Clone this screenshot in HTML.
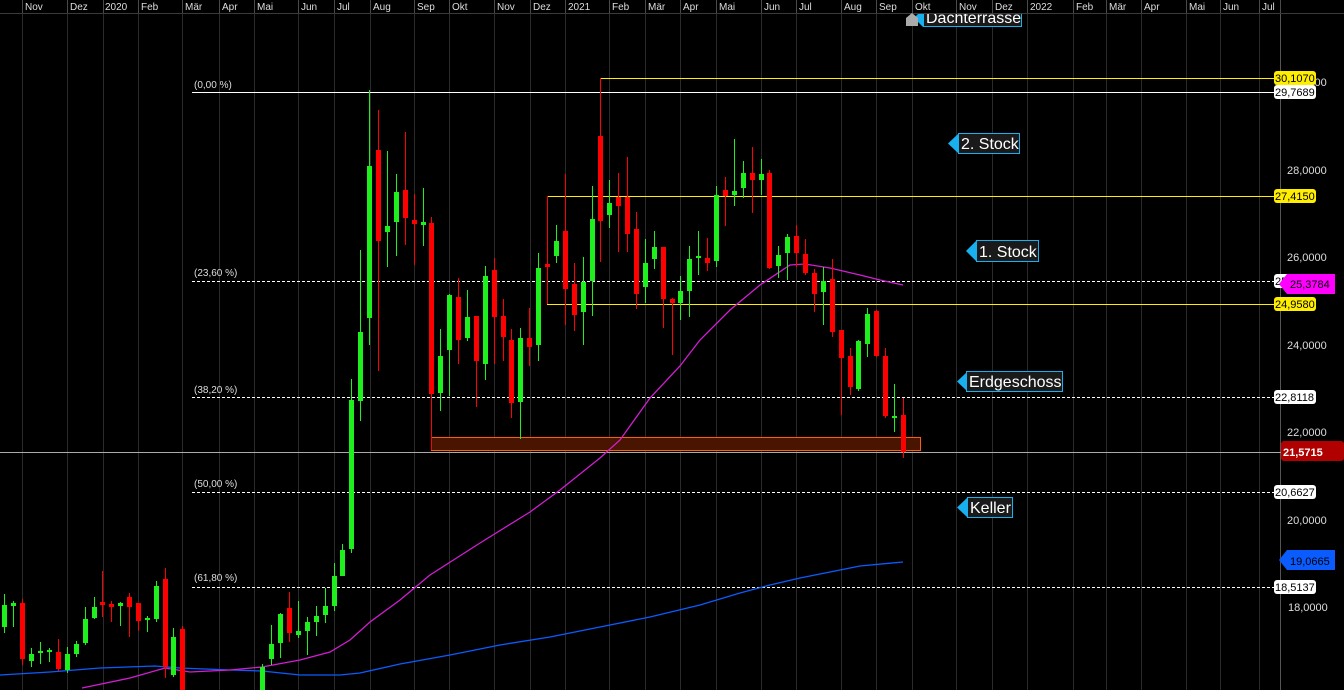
<!DOCTYPE html>
<html><head><meta charset="utf-8"><style>
html,body{margin:0;padding:0;background:#000;width:1344px;height:690px;overflow:hidden}
svg{display:block}
text{font-family:"Liberation Sans",sans-serif}
</style></head><body>
<svg width="1344" height="690" viewBox="0 0 1344 690" xmlns="http://www.w3.org/2000/svg">
<rect width="1344" height="690" fill="#000"/>
<!-- vertical grid -->
<g stroke="#2a2a2a" stroke-width="1">
<path d="M22.5 14V690M67.5 14V690M103.5 14V690M138.5 14V690M182.5 14V690M219.5 14V690M254.5 14V690M298.5 14V690M334.5 14V690M370.5 14V690M414.5 14V690M449.5 14V690M494.5 14V690M530.5 14V690M565.5 14V690M609.5 14V690M645.5 14V690M680.5 14V690M716.5 14V690M761.5 14V690M796.5 14V690M841.5 14V690M876.5 14V690M912.5 14V690M956.5 14V690M992.5 14V690M1027.5 14V690M1073.5 14V690M1106.5 14V690M1141.5 14V690M1186.5 14V690M1220.5 14V690M1259.5 14V690"/>
</g>
<path d="M1280.5 14V690" stroke="#555"/>
<!-- orange box -->
<rect x="431.5" y="437.5" width="489" height="13" fill="#4a1500" stroke="#ff5a10" stroke-width="1"/>
<!-- horizontal levels -->
<path d="M0 452.5H1281" stroke="#aaa"/>
<path d="M192 92.5H1274" stroke="#fff"/>
<g stroke="#fff" stroke-dasharray="3,2"><path d="M192 281.5H1274M192 397.5H1274M192 492.5H1274M192 587.5H1274"/></g>
<path d="M600 78.5H1274M547 196.5H1274M547 304.5H1274" stroke="#ffee00"/>
<path d="M600.5 78V92M547.5 196V304" stroke="#f00"/>
<g fill="#ddd" font-size="10">
<text x="194" y="88">(0,00 %)</text><text x="194" y="276">(23,60 %)</text><text x="194" y="393">(38,20 %)</text><text x="194" y="487">(50,00 %)</text><text x="194" y="581">(61,80 %)</text>
</g>
<!-- moving averages -->
<polyline fill="none" stroke="#0a5cff" stroke-width="1.3" points="0,675 50,672 100,668 155,666 180,668 230,670 262,671 300,675 340,675 360,673 400,664 450,655 500,645 550,637 600,627 650,617 700,605 740,593 770,585 800,578 830,572 860,566 903,562"/>
<polyline fill="none" stroke="#d21ed2" stroke-width="1.3" points="82,688 130,678 165,668 190,672 230,670 262,667 300,660 330,652 350,640 370,622 400,600 430,575 480,543 530,512 560,490 600,458 620,440 650,398 680,366 700,340 730,310 760,285 790,265 805,264 830,268 860,275 880,280 903,285"/>
<!-- green candles -->
<g fill="#1ef01e">
<path stroke="#1ef01e" stroke-width="1" d="M4.5 594V633M13.5 601V627M31.5 648V667M40.5 642V664M49.5 648V662M67.5 647V673M76.5 641V657M85.5 607V645M94.5 597V619M120.5 602V626M147.5 616V632M156.5 581V622M173.5 628V677M262.5 664V690M271.5 625V665M280.5 613V658M298.5 601V638M307.5 617V655M316.5 606V636M325.5 588V623M334.5 563V611M342.5 544V576M351.5 379V553M360.5 250V421M369.5 90V345M387.5 151V267M396.5 174V256M423.5 188V246M440.5 329V411M449.5 294V396M467.5 290V341M485.5 266V380M520.5 328V439M538.5 253V361M556.5 225V263M583.5 257V345M592.5 186V316M609.5 180V228M645.5 239V303M654.5 231V269M680.5 276V320M689.5 246V317M698.5 231V275M716.5 186V267M734.5 139V206M743.5 161V198M761.5 159V195M778.5 246V278M787.5 234V280M823.5 267V325M858.5 340V391M867.5 308V357M894.5 384V432"/>
<rect x="2" y="605" width="5" height="22"/><rect x="11" y="603" width="5" height="3"/><rect x="29" y="654" width="5" height="7"/><rect x="38" y="651" width="5" height="2"/><rect x="47" y="650" width="5" height="2"/><rect x="65" y="654" width="5" height="16"/><rect x="74" y="644" width="5" height="10"/><rect x="83" y="619" width="5" height="24"/><rect x="92" y="607" width="5" height="11"/><rect x="118" y="603" width="5" height="3"/><rect x="145" y="618" width="5" height="2"/><rect x="154" y="586" width="5" height="33"/><rect x="171" y="637" width="5" height="38"/><rect x="260" y="667" width="5" height="23"/><rect x="269" y="644" width="5" height="15"/><rect x="278" y="614" width="5" height="29"/><rect x="296" y="631" width="5" height="4"/><rect x="305" y="622" width="5" height="9"/><rect x="314" y="616" width="5" height="6"/><rect x="323" y="606" width="5" height="9"/><rect x="332" y="576" width="5" height="30"/><rect x="340" y="550" width="5" height="26"/><rect x="349" y="400" width="5" height="149"/><rect x="358" y="332" width="5" height="69"/><rect x="367" y="166" width="5" height="152"/><rect x="385" y="226" width="5" height="6"/><rect x="394" y="192" width="5" height="30"/><rect x="421" y="222" width="5" height="3"/><rect x="438" y="356" width="5" height="37"/><rect x="447" y="295" width="5" height="55"/><rect x="465" y="317" width="5" height="21"/><rect x="483" y="276" width="5" height="88"/><rect x="518" y="338" width="5" height="64"/><rect x="536" y="268" width="5" height="77"/><rect x="554" y="241" width="5" height="15"/><rect x="581" y="282" width="5" height="30"/><rect x="590" y="219" width="5" height="62"/><rect x="607" y="203" width="5" height="12"/><rect x="643" y="263" width="5" height="24"/><rect x="652" y="247" width="5" height="12"/><rect x="678" y="291" width="5" height="12"/><rect x="687" y="259" width="5" height="32"/><rect x="696" y="256" width="5" height="2"/><rect x="714" y="195" width="5" height="66"/><rect x="732" y="191" width="5" height="4"/><rect x="741" y="173" width="5" height="15"/><rect x="759" y="174" width="5" height="6"/><rect x="776" y="255" width="5" height="11"/><rect x="785" y="237" width="5" height="16"/><rect x="821" y="281" width="5" height="11"/><rect x="856" y="341" width="5" height="48"/><rect x="865" y="314" width="5" height="30"/><rect x="892" y="416" width="5" height="2"/>
</g>
<!-- red candles -->
<g fill="#ff0000">
<path stroke="#ff0000" stroke-width="1" d="M22.5 599V665M58.5 639V671M102.5 571V617M111.5 601V622M129.5 593V637M138.5 603V631M165.5 568V678M182.5 626V690M289.5 592V642M378.5 110V371M405.5 132V245M414.5 194V265M431.5 217V450M458.5 278V364M476.5 316V407M494.5 258V364M503.5 299V361M511.5 329V418M529.5 308V366M547.5 262V268M565.5 174V325M574.5 263V331M600.5 78V262M618.5 173V252M627.5 157V252M636.5 212V309M663.5 247V328M672.5 298V355M707.5 238V271M725.5 177V226M752.5 147V213M769.5 170V269M796.5 225V267M805.5 239V275M814.5 269V312M832.5 259V337M841.5 330V415M850.5 348V395M876.5 310V357M885.5 348V418M903.5 398V458"/>
<rect x="20" y="603" width="5" height="56"/><rect x="56" y="652" width="5" height="17"/><rect x="100" y="602" width="5" height="3"/><rect x="109" y="604" width="5" height="3"/><rect x="127" y="597" width="5" height="10"/><rect x="136" y="603" width="5" height="18"/><rect x="163" y="579" width="5" height="88"/><rect x="180" y="629" width="5" height="61"/><rect x="287" y="608" width="5" height="25"/><rect x="376" y="150" width="5" height="91"/><rect x="403" y="190" width="5" height="28"/><rect x="412" y="220" width="5" height="4"/><rect x="429" y="223" width="5" height="171"/><rect x="456" y="297" width="5" height="43"/><rect x="474" y="316" width="5" height="45"/><rect x="492" y="270" width="5" height="47"/><rect x="501" y="316" width="5" height="21"/><rect x="509" y="340" width="5" height="63"/><rect x="527" y="338" width="5" height="9"/><rect x="545" y="264" width="5" height="3"/><rect x="563" y="231" width="5" height="58"/><rect x="572" y="284" width="5" height="31"/><rect x="598" y="136" width="5" height="85"/><rect x="616" y="197" width="5" height="9"/><rect x="625" y="197" width="5" height="37"/><rect x="634" y="229" width="5" height="65"/><rect x="661" y="247" width="5" height="52"/><rect x="670" y="299" width="5" height="4"/><rect x="705" y="258" width="5" height="5"/><rect x="723" y="190" width="5" height="6"/><rect x="750" y="173" width="5" height="7"/><rect x="767" y="173" width="5" height="95"/><rect x="794" y="236" width="5" height="17"/><rect x="803" y="254" width="5" height="19"/><rect x="812" y="273" width="5" height="21"/><rect x="830" y="279" width="5" height="53"/><rect x="839" y="330" width="5" height="28"/><rect x="848" y="356" width="5" height="31"/><rect x="874" y="311" width="5" height="45"/><rect x="883" y="356" width="5" height="60"/><rect x="901" y="415" width="5" height="37"/>
</g>
<!-- annotation labels -->
<g font-size="16" fill="#fff">
<rect x="923.5" y="2.5" width="98" height="24" fill="#1a1a1a" stroke="#19b0f0"/>
<polygon points="914,18 923,9 923,27" fill="#19b0f0"/>
<text x="926" y="23">Dachterrasse</text>
<rect x="958.5" y="133.5" width="61" height="20" fill="#1a1a1a" stroke="#19b0f0"/><polygon points="948,143.5 958,134 958,153" fill="#19b0f0"/><text x="961" y="149">2. Stock</text>
<rect x="976.5" y="240.5" width="62" height="21" fill="#1a1a1a" stroke="#19b0f0"/><polygon points="966,251 976,241 976,261" fill="#19b0f0"/><text x="979" y="257">1. Stock</text>
<rect x="966.5" y="371.5" width="96" height="20" fill="#1a1a1a" stroke="#19b0f0"/><polygon points="957,381.5 967,372 967,391" fill="#19b0f0"/><text x="969" y="387">Erdgeschoss</text>
<rect x="967.5" y="497.5" width="45" height="20" fill="#1a1a1a" stroke="#19b0f0"/><polygon points="957,507.5 967,498 967,517" fill="#19b0f0"/><text x="970" y="513">Keller</text>
</g>
<!-- header (drawn over Dachterrasse label) -->
<rect x="0" y="0" width="1344" height="13" fill="#000"/>
<path d="M0 13.5H1344" stroke="#3a3a3a"/>
<g stroke="#4a4a4a"><path d="M22.5 0V13M67.5 0V13M103.5 0V13M138.5 0V13M182.5 0V13M219.5 0V13M254.5 0V13M298.5 0V13M334.5 0V13M370.5 0V13M414.5 0V13M449.5 0V13M494.5 0V13M530.5 0V13M565.5 0V13M609.5 0V13M645.5 0V13M680.5 0V13M716.5 0V13M761.5 0V13M796.5 0V13M841.5 0V13M876.5 0V13M912.5 0V13M956.5 0V13M992.5 0V13M1027.5 0V13M1073.5 0V13M1106.5 0V13M1141.5 0V13M1186.5 0V13M1220.5 0V13M1259.5 0V13M1280.5 0V13"/></g>
<g fill="#ddd" font-size="10">
<text x="25" y="10">Nov</text><text x="70" y="10">Dez</text><text x="105" y="10">2020</text><text x="141" y="10">Feb</text><text x="185" y="10">Mär</text><text x="222" y="10">Apr</text><text x="257" y="10">Mai</text><text x="301" y="10">Jun</text><text x="337" y="10">Jul</text><text x="373" y="10">Aug</text><text x="417" y="10">Sep</text><text x="452" y="10">Okt</text><text x="497" y="10">Nov</text><text x="533" y="10">Dez</text><text x="568" y="10">2021</text><text x="612" y="10">Feb</text><text x="648" y="10">Mär</text><text x="683" y="10">Apr</text><text x="719" y="10">Mai</text><text x="764" y="10">Jun</text><text x="799" y="10">Jul</text><text x="844" y="10">Aug</text><text x="879" y="10">Sep</text><text x="915" y="10">Okt</text><text x="959" y="10">Nov</text><text x="995" y="10">Dez</text><text x="1030" y="10">2022</text><text x="1076" y="10">Feb</text><text x="1109" y="10">Mär</text><text x="1144" y="10">Apr</text><text x="1189" y="10">Mai</text><text x="1223" y="10">Jun</text><text x="1262" y="10">Jul</text>
</g>
<path d="M906 26V18L912 13L918 18V26Z" fill="#aaa"/>
<!-- right axis -->
<g fill="#ddd" font-size="11">
<text x="1287" y="86">30,0000</text>
<text x="1287" y="174">28,0000</text><text x="1287" y="261">26,0000</text><text x="1287" y="349">24,0000</text><text x="1287" y="436">22,0000</text><text x="1287" y="524">20,0000</text><text x="1288" y="611">18,0000</text>
</g>
<g font-size="11" fill="#000">
<rect x="1274" y="71" width="42" height="14" rx="3" fill="#ffee00"/><text x="1275" y="82">30,1070</text>
<rect x="1274" y="85" width="42" height="14" rx="3" fill="#fff"/><text x="1275" y="96">29,7689</text>
<rect x="1274" y="189" width="42" height="14" rx="3" fill="#ffee00"/><text x="1275" y="200">27,4150</text>
<rect x="1274" y="274" width="42" height="14" rx="3" fill="#fff"/><text x="1275" y="285">25</text>
<polygon points="1279,284 1287,274 1335,274 1335,294 1287,294" fill="#ff00ff"/><text x="1290" y="288">25,3784</text>
<rect x="1274" y="297" width="42" height="14" rx="3" fill="#ffee00"/><text x="1275" y="308">24,9580</text>
<rect x="1274" y="390" width="42" height="14" rx="3" fill="#fff"/><text x="1275" y="401">22,8118</text>
<rect x="1281" y="441" width="63" height="20" rx="3" fill="#b00000"/><text x="1283" y="456" fill="#fff" font-weight="bold">21,5715</text>
<rect x="1274" y="485" width="42" height="14" rx="3" fill="#fff"/><text x="1275" y="496">20,6627</text>
<polygon points="1279,560 1287,550 1335,550 1335,570 1287,570" fill="#0a5cff"/><text x="1290" y="565">19,0665</text>
<rect x="1274" y="580" width="42" height="14" rx="3" fill="#fff"/><text x="1275" y="591">18,5137</text>
</g>
</svg>
</body></html>
